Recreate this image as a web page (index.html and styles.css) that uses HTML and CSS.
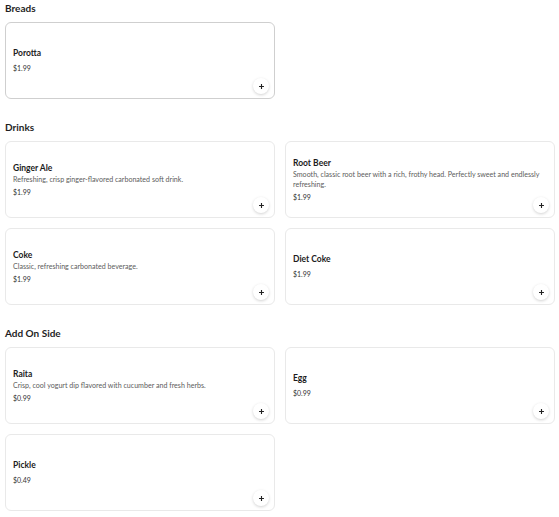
FILE: index.html
```html
<!DOCTYPE html>
<html lang="en">
<head>
  <meta charset="UTF-8">
  <meta name="viewport" content="width=device-width, initial-scale=1.0">
  <title>Menu</title>
  <link rel="stylesheet" href="styles.css">
</head>
<body>
  <main class="menu">
    <section class="category">
      <h2>Breads</h2>
      <div class="items">
        <div class="item item-active">
          <h3 class="item-title">Porotta</h3>
          <p class="item-price">$1.99</p>
          <button class="add-btn" aria-label="Add Porotta"><svg viewBox="0 0 10 10"><path d="M5 1.5v7M1.5 5h7"/></svg></button>
        </div>
      </div>
    </section>

    <section class="category">
      <h2>Drinks</h2>
      <div class="items">
        <div class="item">
          <h3 class="item-title">Ginger Ale</h3>
          <p class="item-desc">Refreshing, crisp ginger-flavored carbonated soft drink.</p>
          <p class="item-price">$1.99</p>
          <button class="add-btn" aria-label="Add Ginger Ale"><svg viewBox="0 0 10 10"><path d="M5 1.5v7M1.5 5h7"/></svg></button>
        </div>
        <div class="item">
          <h3 class="item-title">Root Beer</h3>
          <p class="item-desc">Smooth, classic root beer with a rich, frothy head. Perfectly sweet and endlessly refreshing.</p>
          <p class="item-price">$1.99</p>
          <button class="add-btn" aria-label="Add Root Beer"><svg viewBox="0 0 10 10"><path d="M5 1.5v7M1.5 5h7"/></svg></button>
        </div>
        <div class="item">
          <h3 class="item-title">Coke</h3>
          <p class="item-desc">Classic, refreshing carbonated beverage.</p>
          <p class="item-price">$1.99</p>
          <button class="add-btn" aria-label="Add Coke"><svg viewBox="0 0 10 10"><path d="M5 1.5v7M1.5 5h7"/></svg></button>
        </div>
        <div class="item">
          <h3 class="item-title">Diet Coke</h3>
          <p class="item-price">$1.99</p>
          <button class="add-btn" aria-label="Add Diet Coke"><svg viewBox="0 0 10 10"><path d="M5 1.5v7M1.5 5h7"/></svg></button>
        </div>
      </div>
    </section>

    <section class="category">
      <h2>Add On Side</h2>
      <div class="items">
        <div class="item">
          <h3 class="item-title">Raita</h3>
          <p class="item-desc">Crisp, cool yogurt dip flavored with cucumber and fresh herbs.</p>
          <p class="item-price">$0.99</p>
          <button class="add-btn" aria-label="Add Raita"><svg viewBox="0 0 10 10"><path d="M5 1.5v7M1.5 5h7"/></svg></button>
        </div>
        <div class="item">
          <h3 class="item-title">Egg</h3>
          <p class="item-price">$0.99</p>
          <button class="add-btn" aria-label="Add Egg"><svg viewBox="0 0 10 10"><path d="M5 1.5v7M1.5 5h7"/></svg></button>
        </div>
        <div class="item">
          <h3 class="item-title">Pickle</h3>
          <p class="item-price">$0.49</p>
          <button class="add-btn" aria-label="Add Pickle"><svg viewBox="0 0 10 10"><path d="M5 1.5v7M1.5 5h7"/></svg></button>
        </div>
      </div>
    </section>
  </main>
</body>
</html>
```

FILE: styles.css
```css
body {
  font-family: Lato, "Noto Sans", sans-serif;
  margin: 0;
  padding: 0;
  background-color: #fff;
  color: #222;
}
.menu {
  padding: 1px 4px 0 5px;
}
.category {
  margin-bottom: 21px;
}
.category h2 {
  font-size: 10px;
  line-height: 14px;
  font-weight: 700;
  margin: 0 0 7px;
  color: #1f1f1f;
}
.items {
  display: grid;
  grid-template-columns: 1fr 1fr;
  gap: 10px;
}
.item {
  position: relative;
  box-sizing: border-box;
  min-height: 77px;
  display: flex;
  flex-direction: column;
  justify-content: center;
  padding: 8px 7px;
  border: 1px solid #e9e9e9;
  border-radius: 6px;
  background: #fff;
}
.item-active {
  border-color: #cfcfcf;
}
.item-title {
  font-size: 8.5px;
  line-height: 11px;
  font-weight: 700;
  margin: 0 0 1px;
  color: #1c1c1c;
}
.item-desc {
  font-size: 7.1px;
  line-height: 10px;
  margin: 0 0 2px;
  color: #5c5c5c;
}
.item-price {
  font-size: 7px;
  line-height: 10px;
  margin: 0;
  color: #333;
}
.item-title + .item-price {
  margin-top: 3px;
}
.add-btn {
  position: absolute;
  right: 5px;
  bottom: 4px;
  width: 16px;
  height: 16px;
  padding: 0;
  border: none;
  border-radius: 50%;
  background: #fff;
  box-shadow: 0 1px 3px rgba(0, 0, 0, 0.18);
  display: flex;
  align-items: center;
  justify-content: center;
  cursor: pointer;
}
.add-btn svg {
  width: 7px;
  height: 7px;
  fill: none;
  stroke: #222;
  stroke-width: 1.6;
}
```
